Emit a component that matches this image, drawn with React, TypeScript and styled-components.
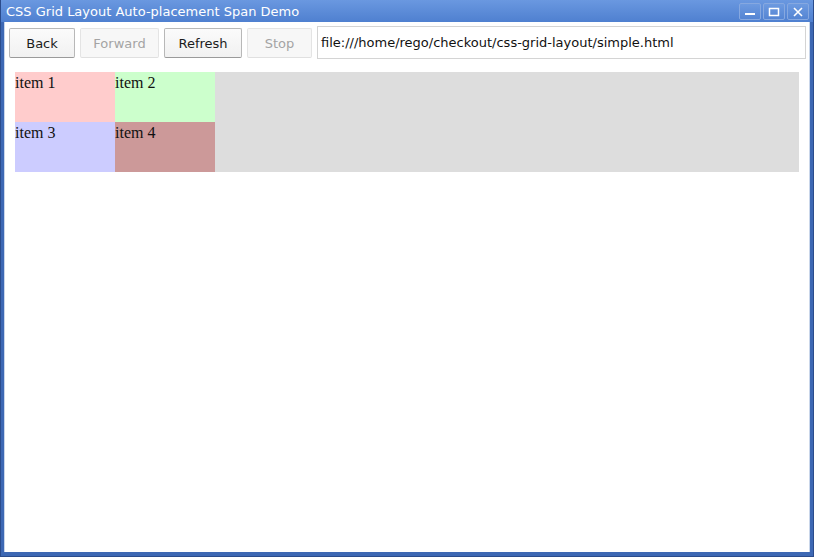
import styled, { createGlobalStyle } from 'styled-components';

const GlobalStyle = createGlobalStyle`
  html, body {
    margin: 0;
    padding: 0;
    background: #ffffff;
  }
  #root {
    width: 814px;
    height: 557px;
  }
`;

const WindowFrame = styled.div`
  width: 814px;
  height: 557px;
  box-sizing: border-box;
  display: flex;
  flex-direction: column;
  background: #3d68b4;
  border-left: 1px solid #2b4c8c;
  border-right: 1px solid #2b4c8c;
  border-bottom: 1px solid #2b4c8c;
  font-family: 'DejaVu Sans', 'Liberation Sans', sans-serif;
`;

const TitleBar = styled.div`
  height: 22px;
  flex: none;
  display: flex;
  align-items: center;
  justify-content: space-between;
  padding: 0 4px 0 5px;
  background: linear-gradient(#6a98e0, #4f80d0);
  color: #ffffff;
  font-size: 13px;
`;

const TitleText = styled.span`
  line-height: 22px;
  padding-top: 1px;
`;

const WinControls = styled.div`
  display: flex;
  gap: 2px;
  margin-top: 1px;
`;

const WinButton = styled.div`
  width: 22px;
  height: 17px;
  box-sizing: border-box;
  border: 1px solid #86a8e0;
  border-radius: 2px;
  background: linear-gradient(#6d9ae0, #5585d3);
  display: flex;
  align-items: center;
  justify-content: center;
`;

const ClientArea = styled.div`
  flex: 1;
  margin: 0 3px 4px 3px;
  background: #ffffff;
  border-left: 1px solid #c9d6ea;
  border-right: 1px solid #c9d6ea;
  display: flex;
  flex-direction: column;
`;

const Toolbar = styled.div`
  display: flex;
  align-items: center;
  gap: 5px;
  padding: 4px 3px 0 4px;
  height: 37px;
  box-sizing: border-box;
`;

const NavButton = styled.button<{ $disabled?: boolean; $width: number }>`
  width: ${(p) => p.$width}px;
  height: 30px;
  margin-top: 1px;
  box-sizing: border-box;
  border: 1px solid ${(p) => (p.$disabled ? '#e4e4e4' : '#b8b8b8')};
  border-bottom-color: ${(p) => (p.$disabled ? '#e0e0e0' : '#9a9a9a')};
  border-radius: 2px;
  background: ${(p) => (p.$disabled ? '#f7f7f7' : 'linear-gradient(#fbfbfb, #f1f1f1)')};
  color: ${(p) => (p.$disabled ? '#a4a4a4' : '#1c1c1c')};
  font-family: 'DejaVu Sans', 'Liberation Sans', sans-serif;
  font-size: 13px;
  padding: 0;
`;

const UrlBox = styled.div`
  flex: 1;
  height: 33px;
  box-sizing: border-box;
  border: 1px solid #d4d4d4;
  display: flex;
  align-items: center;
  padding-left: 3px;
  font-size: 13px;
  color: #111111;
`;

const Page = styled.div`
  padding: 13px 10px 0 10px;
`;

const Grid = styled.div`
  display: grid;
  grid-template-columns: 100px 100px;
  grid-auto-rows: 50px;
  background: #dddddd;
  font-family: 'Liberation Serif', 'Times New Roman', serif;
  font-size: 16px;
  color: #111111;
`;

const Item = styled.div<{ $bg: string }>`
  background: ${(p) => p.$bg};
  line-height: 20px;
  padding-top: 1px;
`;

const items = [
  { label: 'item 1', bg: '#ffcccc' },
  { label: 'item 2', bg: '#ccffcc' },
  { label: 'item 3', bg: '#ccccff' },
  { label: 'item 4', bg: '#cc9999' },
];

export default function App() {
  return (
    <>
      <GlobalStyle />
      <WindowFrame>
        <TitleBar>
          <TitleText>CSS Grid Layout Auto-placement Span Demo</TitleText>
          <WinControls>
            <WinButton>
              <svg width="12" height="10" viewBox="0 0 12 10">
                <rect x="1" y="6" width="10" height="2" fill="#ffffff" />
              </svg>
            </WinButton>
            <WinButton>
              <svg width="12" height="10" viewBox="0 0 12 10">
                <rect x="1.5" y="1.5" width="9" height="7" fill="none" stroke="#ffffff" strokeWidth="1.5" />
              </svg>
            </WinButton>
            <WinButton>
              <svg width="12" height="10" viewBox="0 0 12 10">
                <path d="M2 1 L10 9 M10 1 L2 9" stroke="#ffffff" strokeWidth="1.6" />
              </svg>
            </WinButton>
          </WinControls>
        </TitleBar>
        <ClientArea>
          <Toolbar>
            <NavButton $width={66}>Back</NavButton>
            <NavButton $width={79} $disabled>Forward</NavButton>
            <NavButton $width={78}>Refresh</NavButton>
            <NavButton $width={65} $disabled>Stop</NavButton>
            <UrlBox>file:///home/rego/checkout/css-grid-layout/simple.html</UrlBox>
          </Toolbar>
          <Page>
            <Grid>
              {items.map((it) => (
                <Item key={it.label} $bg={it.bg}>
                  {it.label}
                </Item>
              ))}
            </Grid>
          </Page>
        </ClientArea>
      </WindowFrame>
    </>
  );
}
